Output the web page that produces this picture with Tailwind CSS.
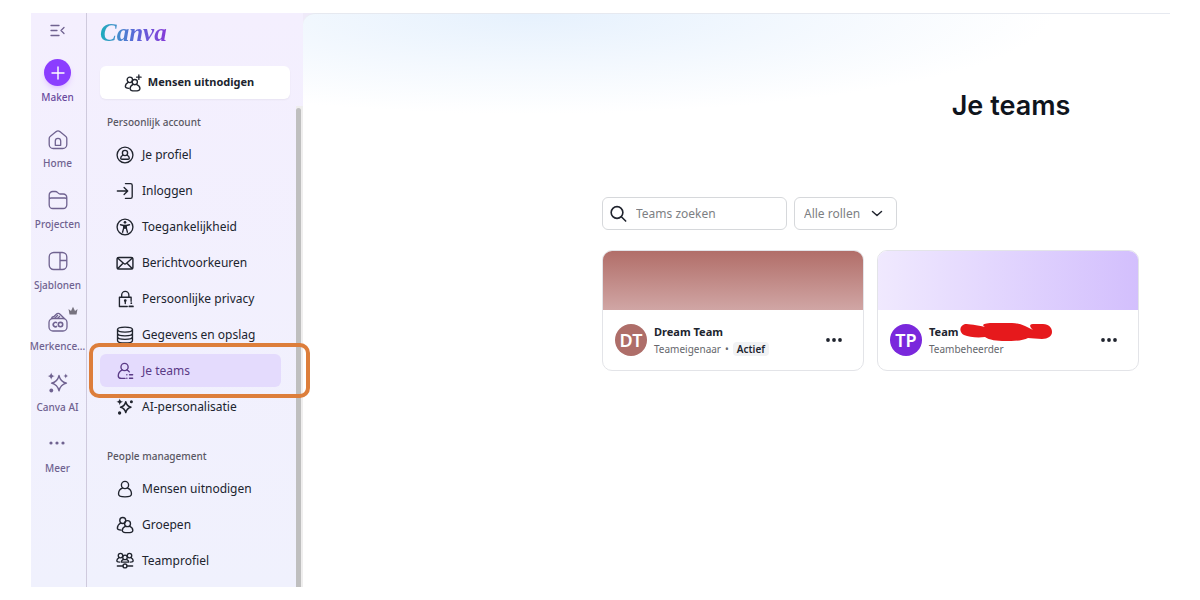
<!DOCTYPE html>
<html lang="nl">
<head>
  <meta charset="UTF-8">
  <meta name="viewport" content="width=device-width, initial-scale=1.0">
  <title>Je teams - Canva</title>
  <script src="https://cdn.jsdelivr.net/npm/@tailwindcss/browser@4"></script>
</head>
<body class="bg-white font-['Noto_Sans','Open_Sans',sans-serif] text-[#20242e]">
  <div class="flex h-screen pl-[31px] pr-[30px] py-[13px]">

    <!-- Icon rail -->
    <nav class="flex w-14 shrink-0 flex-col items-center border-r border-[#cfcadd] bg-linear-to-b from-[#f4effe] to-[#f0f1fd] pr-0.5 text-[10px] leading-[14px] font-medium text-[#6f6290]">
      <button type="button" aria-label="Menu" class="mt-2 flex h-5 w-5 items-center justify-center">
        <svg class="h-5 w-5" viewBox="0 0 20 20" fill="none" stroke="currentColor" stroke-width="1.3" stroke-linecap="round" stroke-linejoin="round"><path d="M3 4.500h8M3 9.500h6M3 14.500h8M16 6.500l-3 3 3 3"/></svg>
      </button>
      <a href="#" class="mt-[18px] flex flex-col items-center gap-1 text-[#6b4a9e]">
        <span class="flex h-[27px] w-[27px] items-center justify-center rounded-full bg-[#8b3dff] text-white shadow-md shadow-purple-300/60">
          <svg class="h-4 w-4" viewBox="0 0 16 16" fill="none" stroke="currentColor" stroke-width="1.4" stroke-linecap="round"><path d="M8 2v12M2 8h12"/></svg>
        </span>
        Maken
      </a>
      <div class="mt-[23px] flex flex-col items-center gap-[18px]">
        <a href="#" class="flex flex-col items-center gap-[5px]">
          <svg class="h-6 w-6" viewBox="0 0 24 24" fill="none" stroke="currentColor" stroke-width="1.3" stroke-linejoin="round"><path d="M3.200 11.500c0-1 .4-1.700 1.200-2.300l5.800-4.600c1.100-.8 2.500-.8 3.600 0l5.800 4.600c.8.600 1.200 1.300 1.200 2.300v6a4 4 0 0 1-4 4H7.200a4 4 0 0 1-4-4z"/><path d="M9.300 18.300V14a2.700 2.700 0 0 1 5.400 0v4.300z"/></svg>
          Home
        </a>
        <a href="#" class="flex flex-col items-center gap-[5px]">
          <svg class="h-6 w-6" viewBox="0 0 24 24" fill="none" stroke="currentColor" stroke-width="1.300" stroke-linejoin="round"><path d="M3.200 10.500V7a3.500 3.500 0 0 1 3.500-3.500h2.600c.9 0 1.600.3 2.200.9l1 1c.4.400.9.600 1.500.600h3.300a3.500 3.500 0 0 1 3.500 3.500V17a3.500 3.500 0 0 1-3.500 3.500H6.700A3.500 3.500 0 0 1 3.200 17zM3.200 11.500c0-1 .8-1.500 1.800-1.500h14c1 0 1.800.5 1.800 1.500"/></svg>
          Projecten
        </a>
        <a href="#" class="flex flex-col items-center gap-[5px]">
          <svg class="h-6 w-6" viewBox="0 0 24 24" fill="none" stroke="currentColor" stroke-width="1.3"><rect x="3.200" y="3.500" width="17.600" height="17" rx="4.500"/><path d="M14 3.500v17M14 11.500h6.800"/></svg>
          Sjablonen
        </a>
        <a href="#" class="flex flex-col items-center gap-[5px]">
          <span class="relative">
            <svg class="h-6 w-6" viewBox="0 0 24 24" fill="none" stroke="currentColor" stroke-width="1.3" stroke-linejoin="round"><rect x="3" y="8.500" width="18" height="12.500" rx="4"/><path d="M5.500 8.500c.3-1.300 1.200-1.800 2.500-2l2-2c1.300-1.300 3-1.300 4.300 0l4 4M8.500 8.500l3.500-3.500M11.500 8.500l2.500-2.500"/><path stroke-width="1.600" d="M11 13a2.200 2.200 0 1 0 0 3.200"/><circle cx="14.500" cy="14.600" r="2.200" stroke-width="1.600"/></svg>
            <svg class="absolute -top-1 -right-2 h-2.5 w-2.5" viewBox="0 0 10 10" fill="#77737f"><path d="M1.500 8.500.500 3l2.500 2L5 .8 7 5l2.500-2-1 5.500z"/></svg>
          </span>
          Merkence...
        </a>
        <a href="#" class="flex flex-col items-center gap-[5px]">
          <svg class="h-6 w-6" viewBox="0 0 24 24" fill="none" stroke="currentColor" stroke-width="1.300" stroke-linejoin="round"><path d="M13 4.500c1 4.500 3 6.700 7.500 7.700-4.500 1-6.500 3.200-7.500 7.700-1-4.500-3-6.700-7.500-7.700 4.500-1 6.500-3.200 7.500-7.700z"/><path fill="currentColor" stroke="none" d="M5.200 1.500c.5 2.300 1.300 3.100 3.600 3.600-2.300.5-3.100 1.300-3.600 3.600-.5-2.300-1.300-3.100-3.600-3.600 2.300-.5 3.100-1.300 3.600-3.600zM19.800 2.500c.4 1.600.9 2.200 2.500 2.500-1.600.4-2.200.9-2.500 2.500-.4-1.600-.9-2.100-2.500-2.500 1.600-.3 2.100-.9 2.500-2.500z"/><circle cx="5.300" cy="19.500" r="1.900" fill="currentColor" stroke="none"/></svg>
          Canva AI
        </a>
        <a href="#" class="flex flex-col items-center gap-[5px]">
          <svg class="h-6 w-6" viewBox="0 0 24 24" fill="currentColor"><circle cx="6" cy="11" r="1.600"/><circle cx="12" cy="11" r="1.600"/><circle cx="18" cy="11" r="1.600"/></svg>
          Meer
        </a>
      </div>
    </nav>

    <!-- Settings menu -->
    <aside class="relative z-10 w-[216px] shrink-0 bg-linear-to-b from-[#f4effe] to-[#f0f1fd] px-[13px]">
      <a href="#" class="block w-fit bg-linear-to-r from-[#12aebc] via-[#5865d8] to-[#8a30d8] bg-clip-text pt-1 pr-1 font-['Liberation_Serif',serif] text-[25px] leading-8 font-bold text-transparent italic">Canva</a>
      <button type="button" class="mt-[17px] flex h-[33px] w-full items-center justify-center gap-1.5 rounded-md bg-white pr-3 text-[11px] font-bold shadow-xs">
        <svg class="h-[18px] w-[18px]" viewBox="0 0 20 20" fill="none" stroke="currentColor" stroke-width="1.500" stroke-linecap="round" stroke-linejoin="round"><circle cx="6.500" cy="6.500" r="3"/><path d="M4.700 9.200C2.800 10.200 1.500 12 1.500 14c0 1.300 1.500 2 4 2"/><circle cx="12" cy="9" r="2.900"/><path d="M10.300 11.500C8 12.500 6.800 14.300 6.800 16c0 1.800 2.200 2.800 5.200 2.800s5.700-1 5.700-2.800c0-1.700-1.700-3.500-4-4.500"/><path d="M16.500 1v5M14 3.500h5"/></svg>
        Mensen uitnodigen
      </button>

      <h2 class="mt-3.5 ml-[7px] text-[10px] leading-[18px] font-medium text-[#595763]">Persoonlijk account</h2>
      <ul class="mt-[7px] mr-[9px] flex flex-col gap-[3px] text-xs">
        <li>
          <a href="#" class="flex h-[33px] items-center gap-2 rounded-md pl-4">
            <svg class="h-[18px] w-[18px]" viewBox="0 0 20 20" fill="none" stroke="currentColor" stroke-width="1.500" stroke-linejoin="round"><circle cx="10" cy="10" r="8.800"/><circle cx="10" cy="7.800" r="2.900"/><path d="M8 10c-1.700.8-2.800 2-2.800 3.500 0 .8.600 1.200 1.400 1.200h6.800c.8 0 1.400-.4 1.400-1.200 0-1.500-1.100-2.700-2.800-3.500"/></svg>
            Je profiel
          </a>
        </li>
        <li>
          <a href="#" class="flex h-[33px] items-center gap-2 rounded-md pl-4">
            <svg class="h-[18px] w-[18px]" viewBox="0 0 20 20" fill="none" stroke="currentColor" stroke-width="1.500" stroke-linecap="round" stroke-linejoin="round"><path d="M1.500 10h11.300M9 6l4 4-4 4M10.500 1.800h5.700A1.800 1.800 0 0 1 18 3.600v12.800a1.800 1.800 0 0 1-1.800 1.800h-5.700"/></svg>
            Inloggen
          </a>
        </li>
        <li>
          <a href="#" class="flex h-[33px] items-center gap-2 rounded-md pl-4">
            <svg class="h-[18px] w-[18px]" viewBox="0 0 20 20" fill="none" stroke="currentColor" stroke-width="1.500" stroke-linecap="round" stroke-linejoin="round"><circle cx="10" cy="10" r="8.800"/><circle cx="10" cy="4.800" r="1.500" fill="currentColor" stroke="none"/><path d="M5 7.500l3.500.8v3L7.300 15.800M15 7.500l-3.500.8v3l1.200 4.500M8.500 8.300h3M8.500 11.300h3M10 8v3.500"/></svg>
            Toegankelijkheid
          </a>
        </li>
        <li>
          <a href="#" class="flex h-[33px] items-center gap-2 rounded-md pl-4">
            <svg class="h-[18px] w-[18px]" viewBox="0 0 20 20" fill="none" stroke="currentColor" stroke-width="1.600" stroke-linecap="round" stroke-linejoin="round"><rect x="1.200" y="3.800" width="17.600" height="12.800" rx="2"/><path d="M1.800 4.500l6.800 6c.8.700 2 .7 2.800 0l6.800-6M2 16l5-5M18 16l-5-5"/></svg>
            Berichtvoorkeuren
          </a>
        </li>
        <li>
          <a href="#" class="flex h-[33px] items-center gap-2 rounded-md pl-4">
            <svg class="h-[18px] w-[18px]" viewBox="0 0 20 20" fill="none" stroke="currentColor" stroke-width="1.500" stroke-linecap="round" stroke-linejoin="round"><path d="M12.500 18.300H3.800V8h13v4.500M6.300 8V5.500a4 4 0 0 1 8 0V8M10.300 12v3"/><circle cx="10.300" cy="11.700" r=".8" fill="currentColor"/><path d="M17 14.500v.100M14.800 18.300h4" stroke-width="2"/></svg>
            Persoonlijke privacy
          </a>
        </li>
        <li>
          <a href="#" class="flex h-[33px] items-center gap-2 rounded-md pl-4">
            <svg class="h-[18px] w-[18px]" viewBox="0 0 20 20" fill="none" stroke="currentColor" stroke-width="1.500"><ellipse cx="10" cy="4" rx="8.300" ry="2.800"/><path d="M1.700 4v12c0 1.600 3.700 2.900 8.300 2.900s8.300-1.300 8.300-2.900V4M1.700 8c0 1.600 3.700 2.900 8.300 2.900s8.300-1.300 8.300-2.900M1.700 12c0 1.600 3.700 2.900 8.300 2.900s8.300-1.300 8.300-2.900"/></svg>
            Gegevens en opslag
          </a>
        </li>
        <li class="relative">
          <a href="#" aria-current="page" class="flex h-[33px] items-center gap-2 rounded-md bg-[#e4dbfd] pl-4 text-[#5a3a86]">
            <svg class="h-[18px] w-[18px]" viewBox="0 0 20 20" fill="none" stroke="currentColor" stroke-width="1.500" stroke-linecap="round" stroke-linejoin="round"><circle cx="9.500" cy="5.500" r="4"/><path d="M7 8.800C4.500 10 2.500 12.500 2.500 15.500c0 1.800 1.500 2.700 3.500 2.700h4M12 8.800c1 .5 2 1.200 2.800 2.200"/><path d="M12 14.200h.100M15 14.200h3.500M12 18h.100M15 18h3.500"/></svg>
            Je teams
          </a>
          <span class="pointer-events-none absolute -top-[11px] -right-[29px] -bottom-[11px] -left-[11px] rounded-[10px] border-4 border-[#dd7e3b]"></span>
        </li>
        <li>
          <a href="#" class="flex h-[33px] items-center gap-2 rounded-md pl-4">
            <svg class="h-[18px] w-[18px]" viewBox="0 0 24 24" fill="none" stroke="currentColor" stroke-width="2" stroke-linejoin="round"><path d="M13 5c1 4.500 2.500 6.200 7 7.200-4.500 1-6 2.700-7 7.200-1-4.500-2.500-6.200-7-7.200 4.500-1 6-2.700 7-7.200z"/><path fill="currentColor" stroke="none" d="M5 .500c.600 2.900 1.600 3.900 4.500 4.500-2.900.6-3.900 1.600-4.500 4.500C4.400 6.600 3.400 5.600.500 5 3.400 4.400 4.400 3.400 5 .500z"/><circle cx="20.500" cy="5" r="2" fill="currentColor" stroke="none"/><circle cx="4.800" cy="20" r="2.200" fill="currentColor" stroke="none"/></svg>
            AI-personalisatie
          </a>
        </li>
      </ul>

      <h2 class="mt-6 ml-[7px] text-[10px] leading-[18px] font-medium text-[#595763]">People management</h2>
      <ul class="mt-[7px] mr-[9px] flex flex-col gap-[3px] text-xs">
        <li>
          <a href="#" class="flex h-[33px] items-center gap-2 rounded-md pl-4">
            <svg class="h-[18px] w-[18px]" viewBox="0 0 20 20" fill="none" stroke="currentColor" stroke-width="1.500" stroke-linecap="round"><circle cx="10" cy="5.500" r="4"/><path d="M7.500 8.800C4.500 10 2.800 12.700 2.800 15.500c0 2 2.500 3.200 7.200 3.200s7.200-1.200 7.200-3.200c0-2.800-1.700-5.500-4.700-6.700"/></svg>
            Mensen uitnodigen
          </a>
        </li>
        <li>
          <a href="#" class="flex h-[33px] items-center gap-2 rounded-md pl-4">
            <svg class="h-[18px] w-[18px]" viewBox="0 0 20 20" fill="none" stroke="currentColor" stroke-width="1.500" stroke-linecap="round"><circle cx="7.500" cy="5" r="3.300"/><path d="M5.300 7.800C3 9 1.500 11.200 1.500 13.500c0 1.300 1.500 2 4.200 2.200"/><circle cx="12.800" cy="8.500" r="3.300"/><path d="M10.800 11.300C8.500 12.300 7 14.200 7 16c0 1.700 2.300 2.500 5.800 2.500s5.900-.8 5.900-2.500c0-1.800-1.500-3.700-3.800-4.700"/></svg>
            Groepen
          </a>
        </li>
        <li>
          <a href="#" class="flex h-[33px] items-center gap-2 rounded-md pl-4">
            <svg class="h-[18px] w-[18px]" viewBox="0 0 20 20" fill="none" stroke="currentColor" stroke-width="1.500" stroke-linecap="round" stroke-linejoin="round"><circle cx="5" cy="4" r="2.500"/><circle cx="15" cy="4" r="2.500"/><circle cx="10" cy="6" r="2.500"/><path d="M3.300 6.200C1.800 7 .9 8.300.9 9.800c0 .9.900 1.400 3.100 1.400M16.700 6.200c1.500.8 2.400 2.100 2.400 3.600 0 .9-.9 1.400-3.100 1.400M8.300 8.200C6.700 9 5.800 10 5.800 11.200h8.400c0-1.200-.9-2.200-2.500-3"/><path d="M1.500 15.500h6.300M12.200 15.500h6.300"/><circle cx="10" cy="15.500" r="2.200"/></svg>
            Teamprofiel
          </a>
        </li>
      </ul>

      <!-- Scrollbar -->
      <div class="absolute top-[93px] right-0 bottom-0 -z-10 w-[7px] bg-[#efeeee] pt-0.5 pr-0.5">
        <div class="h-full rounded-t-full bg-[#bfbfbf]"></div>
      </div>
    </aside>

    <!-- Teams -->
    <div class="flex min-w-0 flex-1 overflow-hidden bg-[#efeaf9]">
      <main class="min-w-0 flex-1 overflow-hidden rounded-tl-xl border-t border-[#e6e9f0] bg-white bg-[radial-gradient(ellipse_520px_100px_at_230px_0px,#e6f1fd,#ffffff)] pl-[299px]">
        <div class="w-[818px]">
          <h1 class="pt-[74px] text-center font-['Inter',sans-serif] text-[27px] leading-9 font-semibold text-[#0f141c]">Je teams</h1>
          <div class="mt-[73px] flex gap-[7px]">
            <label class="flex h-[33px] w-[185px] items-center gap-2 rounded-md border border-[#d6d8db] bg-white px-[7px]">
              <svg class="h-[18px] w-[18px] shrink-0" viewBox="0 0 20 20" fill="none" stroke="currentColor" stroke-width="1.800" stroke-linecap="round"><circle cx="7.800" cy="8.300" r="6.500"/><path d="M12.600 13l4.800 4.800"/></svg>
              <input type="text" aria-label="Teams zoeken" placeholder="Teams zoeken" class="w-full min-w-0 text-xs outline-none placeholder:text-[#7d7f83]">
            </label>
            <div class="relative">
              <select aria-label="Alle rollen" class="h-[33px] w-[103px] appearance-none rounded-md border border-[#d6d8db] bg-white pl-[9px] text-xs text-[#7d7f83]">
                <option>Alle rollen</option>
              </select>
              <svg class="pointer-events-none absolute top-2.5 right-3.5 h-3 w-3" viewBox="0 0 12 12" fill="none" stroke="currentColor" stroke-width="1.500" stroke-linecap="round" stroke-linejoin="round"><path d="M1.500 4.500L6 8.500l4.500-4"/></svg>
            </div>
          </div>

          <div class="mt-5 flex gap-[13px]">
            <article class="w-[262px] overflow-hidden rounded-[10px] border border-[#e3e4e8] bg-white">
              <div class="h-[59px] bg-linear-to-b from-[#b16e69] to-[#d0a6a5]"></div>
              <div class="flex h-[60px] items-center px-3">
                <span class="flex h-8 w-8 items-center justify-center rounded-full bg-[#ae6e69] text-lg font-semibold text-white">DT</span>
                <div class="ml-[7px] flex-1">
                  <h3 class="text-[11px] leading-[18px] font-bold">Dream Team</h3>
                  <p class="flex items-center text-[10px] leading-4 text-[#65676c]">Teameigenaar <span class="mx-1">•</span> <span class="rounded-sm bg-[#f1f2f4] px-1 leading-[14px] font-semibold text-[#20242e]">Actief</span></p>
                </div>
                <button type="button" aria-label="Meer opties" class="mr-2">
                  <svg class="h-[18px] w-[18px]" viewBox="0 0 18 18" fill="currentColor"><circle cx="3" cy="9" r="1.900"/><circle cx="9" cy="9" r="1.900"/><circle cx="15" cy="9" r="1.900"/></svg>
                </button>
              </div>
            </article>

            <article class="w-[262px] overflow-hidden rounded-[10px] border border-[#e3e4e8] bg-white">
              <div class="h-[59px] bg-linear-to-r from-[#f0e9fe] to-[#d3bffd]"></div>
              <div class="flex h-[60px] items-center px-3">
                <span class="flex h-8 w-8 items-center justify-center rounded-full bg-[#7a28dc] text-lg font-semibold text-white">TP</span>
                <div class="relative ml-[7px] flex-1">
                  <h3 class="text-[11px] leading-[18px] font-bold">Team</h3>
                  <p class="text-[10px] leading-4 text-[#65676c]">Teambeheerder</p>
                  <svg class="absolute top-0 left-[31px] h-[18px] w-[92px]" viewBox="0 0 92 18" fill="#e6191c"><path d="M5 1C9 1 17 2 25 4 21 2 24 0 32 0H52C60 0 67 4 73 7 68 2 70 1 75 1H83C89 1 92 5 92 9S88 16 82 16C77 16 72 15 68 15 63 18 52 18 45 18 37 18 29 17 25 14 17 15 9 14 4 12-1 9-1 3 5 1Z"/></svg>
                </div>
                <button type="button" aria-label="Meer opties" class="mr-2">
                  <svg class="h-[18px] w-[18px]" viewBox="0 0 18 18" fill="currentColor"><circle cx="3" cy="9" r="1.900"/><circle cx="9" cy="9" r="1.900"/><circle cx="15" cy="9" r="1.900"/></svg>
                </button>
              </div>
            </article>
          </div>
        </div>
      </main>
    </div>
  </div>
</body>
</html>
